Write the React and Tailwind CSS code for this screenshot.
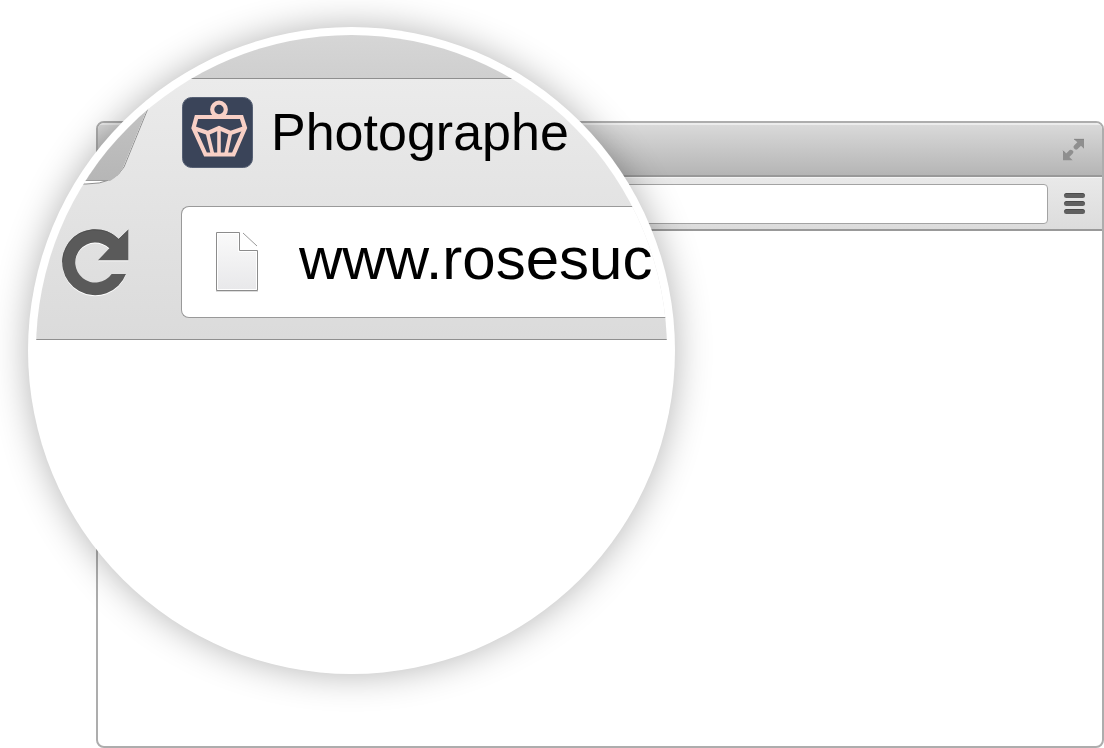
import { useState } from 'react';

function ExpandIcon() {
  return (
    <svg viewBox="186 84 69 72" className="w-[23px] h-6">
      <path d="M222 88H252V116L243 107L232 118Q226 121 221 114Q219 109 223 106L232 97Z" fill="#8f8f8f" />
      <path d="M189 122L198 131L209 120Q216 118 220 124Q221 129 217 132L208 141L218 151H189Z" fill="#8f8f8f" />
      <path d="M222 88H252M189 122L198 131" stroke="#737373" strokeWidth="2" fill="none" />
    </svg>
  );
}

function CupcakeIcon() {
  return (
    <svg viewBox="0 0 71 71" className="w-[71px] h-[71px] shrink-0">
      <rect x="0.5" y="0.5" width="70" height="70" rx="9" fill="#3a4459" stroke="#566074" />
      <g fill="none" stroke="#f8d0c6" strokeWidth="4.2" strokeLinejoin="miter">
        <circle cx="37" cy="12.5" r="6.8" />
        <path d="M14.5 20H59.5L63 31L51.5 57.5H23.5L11.5 31Z" />
        <path d="M11.5 31L26 36L37 31L48.5 36L63 31" />
        <path d="M37 31V57M25.5 36L30.5 57M48.5 36L44 57" strokeWidth="3.6" />
      </g>
    </svg>
  );
}

function ReloadIcon() {
  return (
    <svg viewBox="38 40 201 204" className="w-[67px] h-[68px]">
      <path
        d="M208 70A99 99 0 1 0 230 175H187A60 60 0 1 1 180 98L146 134H237V42Z"
        fill="#fff"
        transform="translate(0 3)"
      />
      <path
        d="M208 70A99 99 0 1 0 230 175H187A60 60 0 1 1 180 98L146 134H237V42Z"
        fill="#5a5a5a"
      />
      <path d="M237 43L208 71A99 99 0 0 0 39 140" fill="none" stroke="#484848" strokeWidth="2" />
    </svg>
  );
}

function PageIcon() {
  return (
    <svg viewBox="0 0 43 61" className="w-[43px] h-[61px] shrink-0">
      <defs>
        <linearGradient id="page" x1="0" y1="0" x2="0" y2="1">
          <stop offset="0" stopColor="#fafafa" />
          <stop offset="1" stopColor="#e8e8ea" />
        </linearGradient>
      </defs>
      <path d="M0.5 0.5H23.5V18.5H41.5V58.5H0.5Z" fill="url(#page)" stroke="#8c8c8c" />
      <path d="M1.5 1.5H22.5V19.5H40.5V57.5H1.5Z" fill="none" stroke="#fff" />
      <path d="M27 1L41 14" stroke="#999" />
      <path d="M0 59.5H42" stroke="#ddd" />
    </svg>
  );
}

// Edge of the neighbouring tab, cut off by the lens
function PreviousTab() {
  return (
    <svg viewBox="0 0 146 107" className="w-[146px] h-[107px] shrink-0">
      <defs>
        <linearGradient id="tab" x1="0" y1="0" x2="0" y2="1">
          <stop offset="0" stopColor="#c8c8c8" />
          <stop offset="1" stopColor="#b6b6b6" />
        </linearGradient>
      </defs>
      <path d="M0 0H124L88 88Q79 105 50 105H0Z" fill="#fff" stroke="#8f8f8f" />
      <path d="M0 0H123.5L87.5 87.5Q83 97 74 102H0Z" fill="url(#tab)" />
      <path d="M0 101.5H72" stroke="#999" />
    </svg>
  );
}

function BrowserWindow() {
  return (
    <div className="flex-1 flex flex-col border-2 border-[#adadad] rounded-lg overflow-hidden bg-white">
      <div className="h-[54px] shrink-0 flex items-center justify-end px-[17px] border-t-2 border-t-[#ececec] border-b-2 border-b-[#999] bg-linear-to-b from-[#d9d9d9] to-[#b5b5b5]">
        <button type="button" aria-label="Full screen">
          <ExpandIcon />
        </button>
      </div>
      <div className="h-[54px] shrink-0 flex items-center gap-4 pl-40 pr-[17px] border-t border-t-[#f5f5f5] border-b-2 border-b-[#999] bg-linear-to-b from-[#e9e9e9] to-[#dcdcdc]">
        <input
          type="text"
          aria-label="Location"
          className="flex-1 min-w-0 h-10 px-3 bg-white border border-[#a3a3a3] rounded-sm outline-none"
        />
        <button type="button" aria-label="Menu" className="w-[21px] flex flex-col gap-[3px]">
          <span className="h-[5px] rounded-full bg-[#606060] border-t border-[#4b4b4b]" />
          <span className="h-[5px] rounded-full bg-[#606060] border-t border-[#4b4b4b]" />
          <span className="h-[5px] rounded-full bg-[#606060] border-t border-[#4b4b4b]" />
        </button>
      </div>
      <div className="flex-1" />
    </div>
  );
}

function Lens() {
  const [url, setUrl] = useState('www.rosesuc');

  return (
    <div className="absolute left-7 top-[27px] w-[647px] h-[647px] rounded-full bg-white p-2 shadow-[0_0_36px_rgba(0,0,0,0.3)]">
      <div className="w-full h-full rounded-full overflow-hidden">
        <div className="h-11 border-b border-[#8f8f8f] bg-linear-to-b from-[#d6d6d6] to-[#cfcfcf]" />
        <div className="h-[261px] border-b border-[#8f8f8f] bg-linear-to-b from-[#ebebeb] to-[#dbdbdb]">
          {/* Tab strip */}
          <div className="h-[127px] flex items-start">
            <PreviousTab />
            <div className="pt-[18px] flex items-center gap-[18px]">
              <CupcakeIcon />
              <span className="text-[52px] leading-[71px] text-black">Photographe</span>
            </div>
          </div>
          {/* Toolbar */}
          <div className="flex items-center">
            <div className="w-[145px] shrink-0 pl-[26px] pt-[2px]">
              <button type="button" aria-label="Reload" className="block">
                <ReloadIcon />
              </button>
            </div>
            <div className="flex-1 min-w-0 h-28 flex items-center gap-10 pl-[34px] bg-white border border-r-0 border-[#999] rounded-l-lg">
              <PageIcon />
              <input
                type="text"
                aria-label="Address"
                value={url}
                onChange={(e) => setUrl(e.target.value)}
                className="flex-1 min-w-0 pb-2 text-6xl text-black bg-transparent outline-none"
              />
            </div>
          </div>
        </div>
      </div>
    </div>
  );
}

function App() {
  return (
    <div className="relative min-h-screen flex flex-col pt-[121px] pl-24 bg-white font-['Liberation_Sans',Arial,sans-serif]">
      <BrowserWindow />
      <Lens />
    </div>
  );
}

export default App;
